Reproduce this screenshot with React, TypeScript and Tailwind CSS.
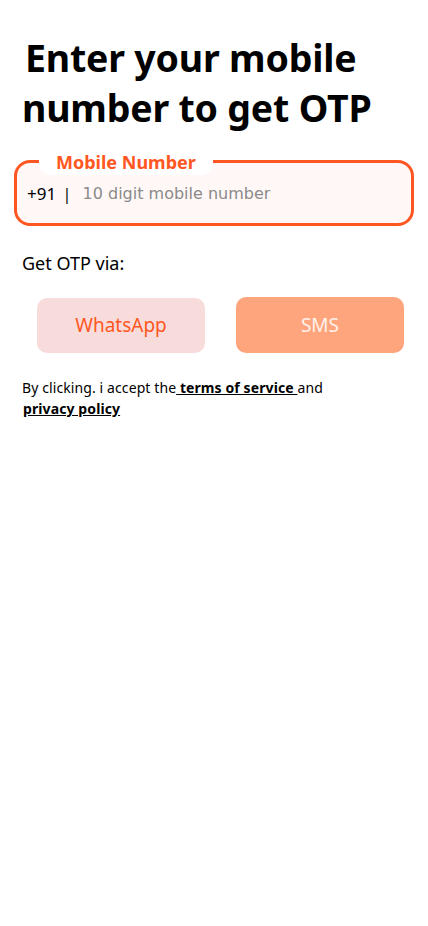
import React from "react";

export default function App() {
  return (
    <div className="w-[428px] h-[926px] bg-white" style={{ fontFamily: '"Noto Sans", "Open Sans", sans-serif' }}>
      <div className="pt-[33px] pl-[22px] pr-[10px]">
        <h1 className="text-[37.5px] leading-[50px] font-bold text-black tracking-[-0.2px]">
          <span className="pl-[3px]">Enter your mobile</span>
          <br />
          number to get OTP
        </h1>
      </div>
      <div className="px-[14px] mt-[27px]">
        <div className="relative h-[66px] rounded-[16px] border-[3px] border-[#ff5722] bg-[#fff8f7] flex items-center pl-[10px]">
          <div className="absolute left-[22px] top-[-14px] h-[26px] px-[17px] bg-white rounded-b-[12px] flex items-center">
            <span className="text-[18px] font-bold text-[#ff5722] leading-none">Mobile Number</span>
          </div>
          <span className="text-[17px] text-black mt-[2px]">+91</span>
          <span className="text-[17px] text-[#111] ml-[6px] mt-[2px]">|</span>
          <span className="text-[16px] text-[#8a8a8a] ml-[11px] mt-[2px]" style={{ fontFamily: '"DejaVu Sans", sans-serif' }}>
            10 digit mobile number
          </span>
        </div>
      </div>
      <div className="pl-[22px] mt-[24px] text-[18px] text-black leading-[26px]">Get OTP via:</div>
      <div className="flex gap-[31px] pl-[37px] mt-[22px]">
        <button className="w-[168px] h-[55px] rounded-[10px] bg-[#f8dcdc] text-[#ff5722] text-[19px]">WhatsApp</button>
        <button className="w-[168px] h-[56px] -mt-[1px] rounded-[10px] bg-[#ffa57d] text-[#fff2ec] text-[19px]">SMS</button>
      </div>
      <div className="pl-[22px] mt-[24px] text-[14px] leading-[21px] text-black tracking-[0.1px]">
        By clicking. i accept the<span className="font-bold underline"> terms of service </span>and
        <br />
        <span className="font-bold underline pl-[1px]">privacy policy</span>
      </div>
    </div>
  );
}
